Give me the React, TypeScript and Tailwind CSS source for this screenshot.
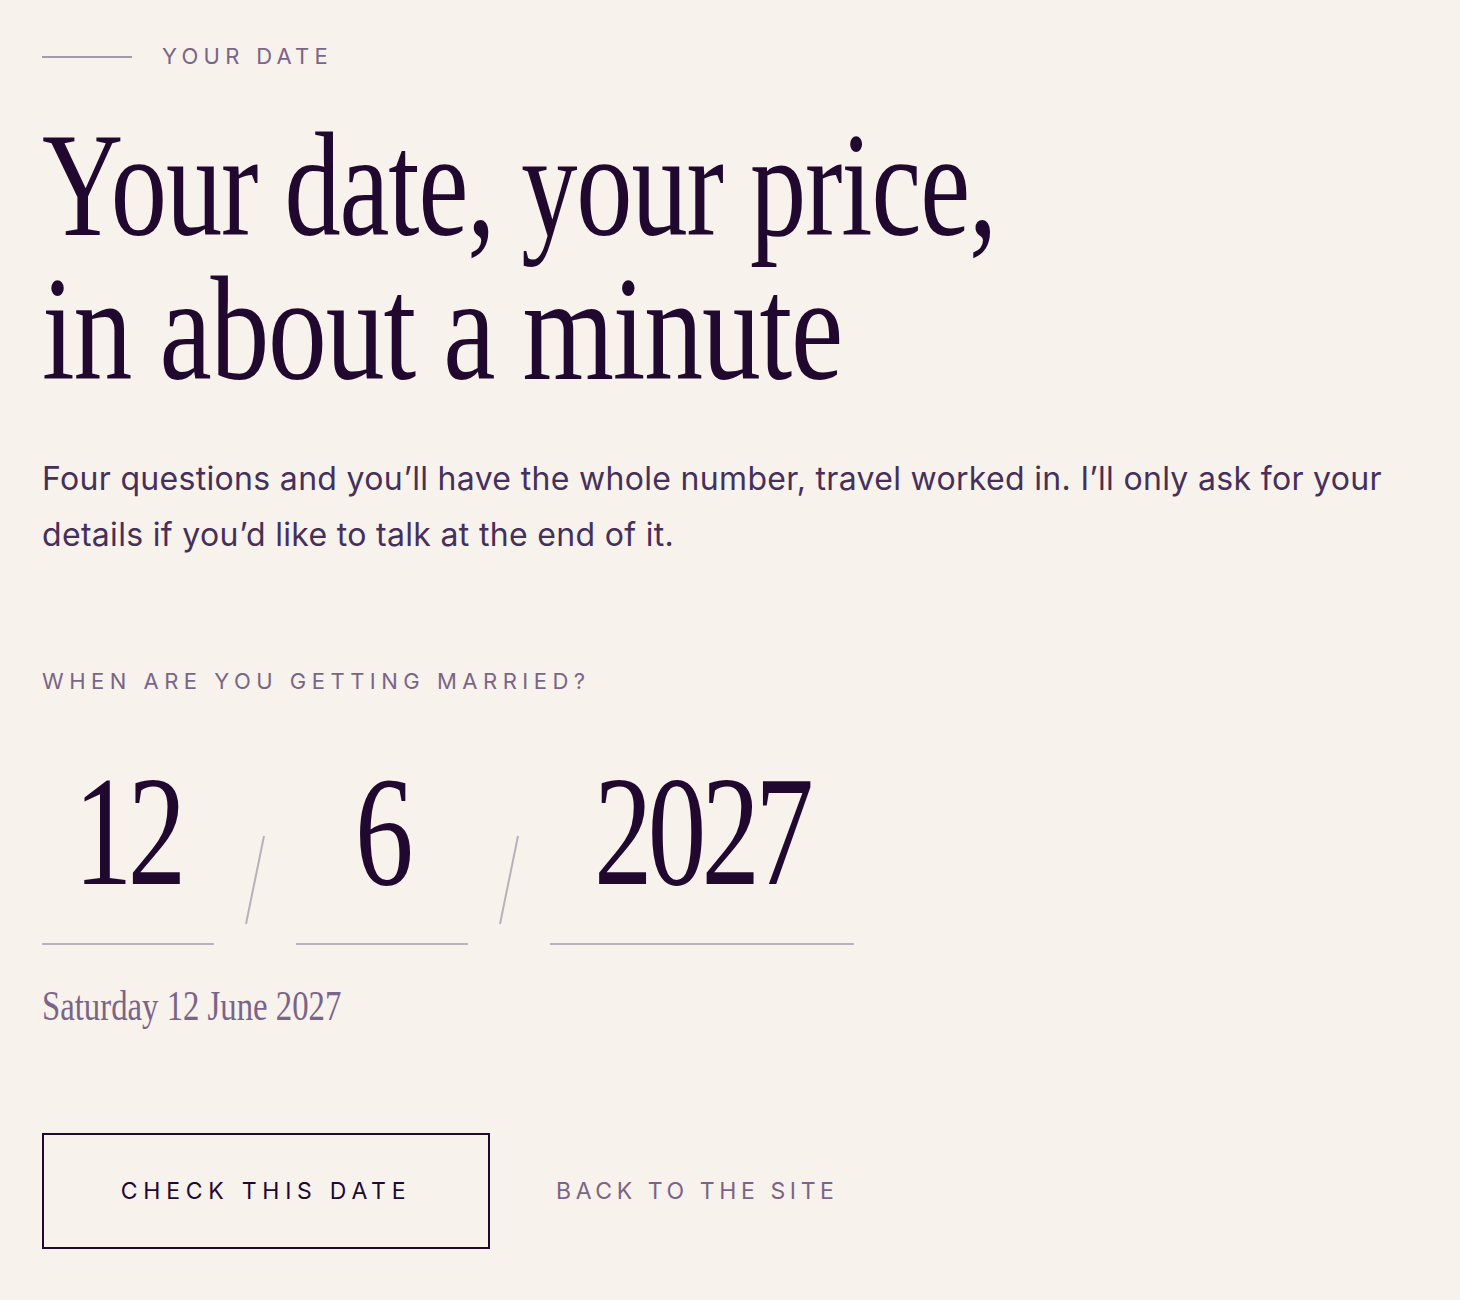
import React from "react";

const serif = "font-['Liberation_Serif','Times_New_Roman',serif]";
const sans = "font-['Inter','Liberation_Sans',sans-serif]";

function Slash() {
  return (
    <div className="flex w-[82px] shrink-0 items-end justify-center pb-[20px]">
      <svg width="24" height="90" viewBox="0 0 24 90" className="block">
        <line x1="21" y1="1" x2="3" y2="89" stroke="#b9b0bc" strokeWidth="2" />
      </svg>
    </div>
  );
}

function DateField({ value, width }: { value: string; width: string }) {
  return (
    <div className={`${width} flex shrink-0 justify-center border-b-2 border-[#bdb3c0] pb-[51px]`}>
      <span
        className={`${serif} inline-block origin-center scale-x-[0.75] text-[156px] leading-[120px] tracking-[-0.04em] text-[#21082f]`}
      >
        {value}
      </span>
    </div>
  );
}

export default function App() {
  return (
    <div className="min-h-[1300px] w-full bg-[#f7f2ec] px-[42px] pt-[40px]">
      {/* eyebrow */}
      <div className="flex items-center gap-[30px]">
        <div className="h-[2px] w-[90px] bg-[#a898ad]" />
        <span className={`${sans} text-[22px] uppercase tracking-[0.24em] text-[#7a6587]`}>
          Your date
        </span>
      </div>

      {/* headline */}
      <h1 className={`${serif} mt-[40px] text-[148px] leading-[144px] tracking-[-0.01em] text-[#21082f]`}>
        <span className="block origin-left scale-x-[0.76] whitespace-nowrap">Your date, your price,</span>
        <span className="block origin-left scale-x-[0.795] whitespace-nowrap">in about a minute</span>
      </h1>

      <p className={`${sans} mt-[50px] text-[32px] leading-[56px] tracking-[0.01em] text-[#46305a]`}>
        Four questions and you’ll have the whole number, travel worked in. I’ll only ask for your
        <br />
        details if you’d like to talk at the end of it.
      </p>

      <div className={`${sans} mt-[102px] text-[22px] uppercase tracking-[0.25em] text-[#7a6587]`}>
        When are you getting married?
      </div>

      {/* date inputs */}
      <div className="mt-[74px] flex items-end">
        <DateField value="12" width="w-[172px]" />
        <Slash />
        <DateField value="6" width="w-[172px]" />
        <Slash />
        <DateField value="2027" width="w-[304px]" />
      </div>

      <div className={`${serif} mt-[36px] text-[42px] leading-[50px] text-[#7a6587]`}>
        <span className="inline-block origin-left scale-x-[0.78] whitespace-nowrap">Saturday 12 June 2027</span>
      </div>

      {/* actions */}
      <div className="mt-[102px] flex items-center gap-[66px]">
        <button
          className={`${sans} h-[116px] w-[448px] border-2 border-[#21082f] text-[23px] uppercase tracking-[0.25em] text-[#21082f]`}
        >
          Check this date
        </button>
        <span className={`${sans} text-[23px] uppercase tracking-[0.2em] text-[#7a6587]`}>
          Back to the site
        </span>
      </div>
    </div>
  );
}
